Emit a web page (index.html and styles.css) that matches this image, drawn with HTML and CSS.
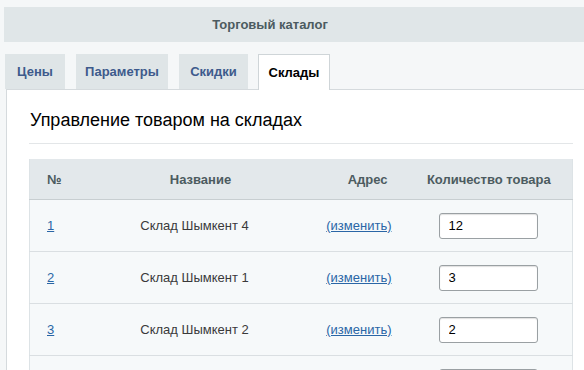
FILE: index.html
```html
<!DOCTYPE html>
<html lang="ru">
<head>
  <meta charset="UTF-8" />
  <title>Торговый каталог</title>
  <link rel="stylesheet" href="styles.css">
</head>
<body>
  <div class="header">Торговый каталог</div>

  <div class="tabs">
    <div class="tab tab-prices">Цены</div>
    <div class="tab tab-params">Параметры</div>
    <div class="tab tab-discounts">Скидки</div>
    <div class="tab tab-stores active">Склады</div>
  </div>

  <div class="panel">
    <h2>Управление товаром на складах</h2>
    <table class="stores">
      <colgroup>
        <col class="w-num">
        <col class="w-name">
        <col class="w-addr">
        <col class="w-qty">
      </colgroup>
      <thead>
        <tr>
          <th class="c-num">№</th>
          <th class="c-name">Название</th>
          <th class="c-addr">Адрес</th>
          <th class="c-qty">Количество товара</th>
        </tr>
      </thead>
      <tbody>
        <tr>
          <td class="c-num"><a href="#">1</a></td>
          <td class="c-name">Склад Шымкент 4</td>
          <td class="c-addr"><a href="#">(изменить)</a></td>
          <td class="c-qty"><input type="text" value="12"></td>
        </tr>
        <tr>
          <td class="c-num"><a href="#">2</a></td>
          <td class="c-name">Склад Шымкент 1</td>
          <td class="c-addr"><a href="#">(изменить)</a></td>
          <td class="c-qty"><input type="text" value="3"></td>
        </tr>
        <tr>
          <td class="c-num"><a href="#">3</a></td>
          <td class="c-name">Склад Шымкент 2</td>
          <td class="c-addr"><a href="#">(изменить)</a></td>
          <td class="c-qty"><input type="text" value="2"></td>
        </tr>
        <tr>
          <td class="c-num"></td>
          <td class="c-name"></td>
          <td class="c-addr"></td>
          <td class="c-qty"><input type="text" value=""></td>
        </tr>
      </tbody>
    </table>
  </div>
</body>
</html>
```
FILE: styles.css
```css
body { margin: 0; background: #f5f7f8; font-family: "Liberation Sans", Arial, sans-serif; font-size: 13px; color: #333; overflow: hidden; }

.header { margin: 7px 0 0 4px; padding-right: 48px; height: 35px; line-height: 35px; background: #e0e6e8; color: #4c5b60; font-weight: bold; text-align: center; }

.tabs { display: flex; margin-top: 12px; padding-left: 5px; height: 35px; }
.tab { height: 35px; line-height: 35px; background: #dfe5e7; color: #3d5a8c; font-weight: bold; text-align: center; margin-right: 11px; box-sizing: border-box; }
.tab-prices { width: 60px; }
.tab-params { width: 92px; }
.tab-discounts { width: 69px; margin-right: 10px; }
.tab-stores { width: 72px; }
.tab.active { background: #fff; color: #000; border: 1px solid #cfd5d8; border-bottom: none; height: 36px; position: relative; z-index: 1; }

.panel { margin-left: 6px; border-left: 1px solid #d5dadd; border-top: 1px solid #d5dadd; background: #fff; padding: 0 11px 0 22px; height: 300px; }
.panel h2 { margin: 0; padding: 20px 0 12px 1px; font-size: 18px; font-weight: normal; color: #000; border-bottom: 1px solid #e3e6e8; }

.stores { width: 100%; table-layout: fixed; border-collapse: collapse; margin-top: 15px; border-left: 1px solid #dde3e6; border-right: 1px solid #dde3e6; }
.w-num { width: 71px; }
.w-name { width: 200px; }
.w-addr { width: 100px; }

.stores th { height: 40px; background: #e3e8eb; color: #4c5b60; font-weight: bold; border-bottom: 1px solid #c8ced1; padding: 0; }
.stores td { height: 51px; background: #f6f9fa; border-bottom: 1px solid #dadfe2; padding: 0; color: #3a3a3a; }
.stores a { color: #2a66a6; }

.stores .c-num { text-align: left; padding-left: 17px; }
.stores .c-name { text-align: center; }
.stores td.c-name { padding-right: 12px; }
.stores .c-addr { text-align: right; padding-right: 13px; }
.stores td.c-addr { padding-right: 9px; }
.stores th.c-qty { text-align: center; padding-left: 5px; }
.stores td.c-qty { text-align: left; padding-left: 38px; }

.stores input { width: 99px; height: 26px; box-sizing: border-box; border: 1px solid #9aa0a3; border-radius: 3px; padding: 0 9px; font-family: "Liberation Sans", Arial, sans-serif; font-size: 13px; color: #000; box-shadow: inset 0 1px 1px #e0e0e0; }
```
